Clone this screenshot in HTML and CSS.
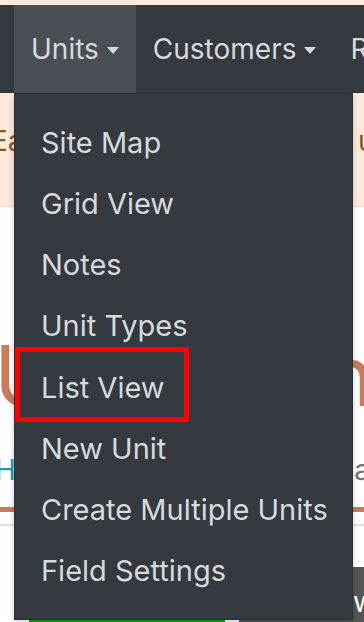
FILE: index.html
```html
<!DOCTYPE html>
<html lang="en">

<head>
  <meta charset="UTF-8">
  <title>Units</title>
  <meta name="viewport" content="width=device-width, initial-scale=1">
  <link rel="stylesheet" href="styles.css">
</head>

<body>
  <div class="top-strip"></div>
  <nav class="navbar">
    <ul class="nav">
      <li class="nav-item active">
        <a class="nav-link dropdown-toggle" href="#">Units</a>
        <div class="dropdown-menu">
          <a class="dropdown-item" href="#">Site Map</a>
          <a class="dropdown-item" href="#">Grid View</a>
          <a class="dropdown-item" href="#">Notes</a>
          <a class="dropdown-item" href="#">Unit Types</a>
          <a class="dropdown-item marked" href="#">List View<span class="highlight"></span></a>
          <a class="dropdown-item" href="#">New Unit</a>
          <a class="dropdown-item" href="#">Create Multiple Units</a>
          <a class="dropdown-item" href="#">Field Settings</a>
        </div>
      </li>
      <li class="nav-item">
        <a class="nav-link dropdown-toggle" href="#">Customers</a>
      </li>
      <li class="nav-item">
        <a class="nav-link" href="#">Reports</a>
      </li>
    </ul>
  </nav>

  <div class="alert">
    <span class="alert-left">Each</span>
    <span class="alert-right">unit</span>
  </div>

  <div class="page">
    <div class="title-row">
      <span class="title-left">Units</span>
      <span class="title-right">nl</span>
    </div>
    <div class="crumbs">
      <a class="crumb-link" href="#">Home</a>
      <span class="crumb-right">a</span>
    </div>
    <div class="rule-orange"></div>
    <div class="rule-grey"></div>
    <div class="actions">
      <button class="btn-green">Add</button>
      <button class="btn-dark">View</button>
    </div>
  </div>
</body>

</html>
```

FILE: styles.css
```css
body {
  font-family: Inter, "Noto Sans", sans-serif;
  background: #fff;
  margin: 0;
  width: 364px;
  height: 622px;
  overflow: hidden;
}

.top-strip {
  height: 5px;
  background: #fde9d9;
}

/* navbar */
.navbar {
  height: 88px;
  background: #343a40;
  padding-left: 14px;
  position: relative;
  z-index: 10;
}

.nav {
  display: flex;
  height: 100%;
  margin: 0;
  padding: 0;
  list-style: none;
  white-space: nowrap;
}

.nav-item {
  position: relative;
  display: flex;
  align-items: center;
}

.nav-item.active {
  background: #4a4f56;
}

.nav-link {
  padding: 0 17px;
  color: #d7d9dc;
  font-size: 28px;
  text-decoration: none;
  display: flex;
  align-items: center;
}

.dropdown-toggle::after {
  content: "";
  margin-left: 8px;
  margin-top: 2px;
  border-top: 7px solid #d7d9dc;
  border-left: 6.5px solid transparent;
  border-right: 6.5px solid transparent;
}

.dropdown-menu {
  position: absolute;
  top: 100%;
  left: 0;
  width: 337px;
  padding: 18px 0 18px;
  background: #343a40;
  border: 1px solid #2b3035;
  box-shadow: 0 2px 6px #0003;
}

.dropdown-item {
  display: block;
  position: relative;
  height: 61.15px;
  line-height: 61px;
  padding: 0 26px;
  color: #d7d9dc;
  font-size: 29px;
  text-decoration: none;
}

.highlight {
  position: absolute;
  top: -10px;
  left: 0;
  width: 164px;
  height: 65px;
  border: 5px solid #ff0000;
}

/* page behind the menu */
.alert {
  background: #fdeadb;
  border-bottom: 1px solid #f6dcc6;
  color: #8a5628;
  font-size: 28px;
  display: flex;
  justify-content: space-between;
  align-items: flex-start;
  padding-top: 31px;
  box-sizing: border-box;
  height: 114px;
  overflow: hidden;
}

.alert-left {
  margin-left: -9px;
}

.alert-right {
  margin-right: -43px;
}

.page {
  overflow: hidden;
}

.title-row {
  display: flex;
  justify-content: space-between;
  margin-top: 126px;
  height: 86px;
  color: #c97b5c;
  font-size: 84px;
  line-height: 86px;
}

.title-left {
  margin-left: -6px;
}

.title-right {
  margin-right: -30px;
}

.crumbs {
  display: flex;
  justify-content: space-between;
  margin-top: 34px;
  font-size: 28px;
  line-height: 34px;
}

.crumb-link {
  color: #1f9ab2;
  text-decoration: none;
  margin-left: -5px;
}

.crumb-right {
  color: #6c757d;
  margin-right: -6px;
}

.rule-orange {
  margin-top: 20px;
  height: 5px;
  background: #c97b5c;
}

.rule-grey {
  margin-top: 12px;
  height: 2px;
  background: #dee2e6;
}

.actions {
  display: flex;
  gap: 14px;
  padding-left: 29px;
  margin-top: 41px;
}

.btn-green {
  width: 196px;
  height: 70px;
  border: none;
  background: #0aa30a;
  color: #fff;
  font-family: inherit;
  font-size: 28px;
}

.btn-dark {
  flex: 1;
  height: 70px;
  border: none;
  background: #555;
  color: #fff;
  font-family: inherit;
  font-size: 28px;
  text-align: right;
  padding-right: 0;
  margin-right: -12px;
}
```
